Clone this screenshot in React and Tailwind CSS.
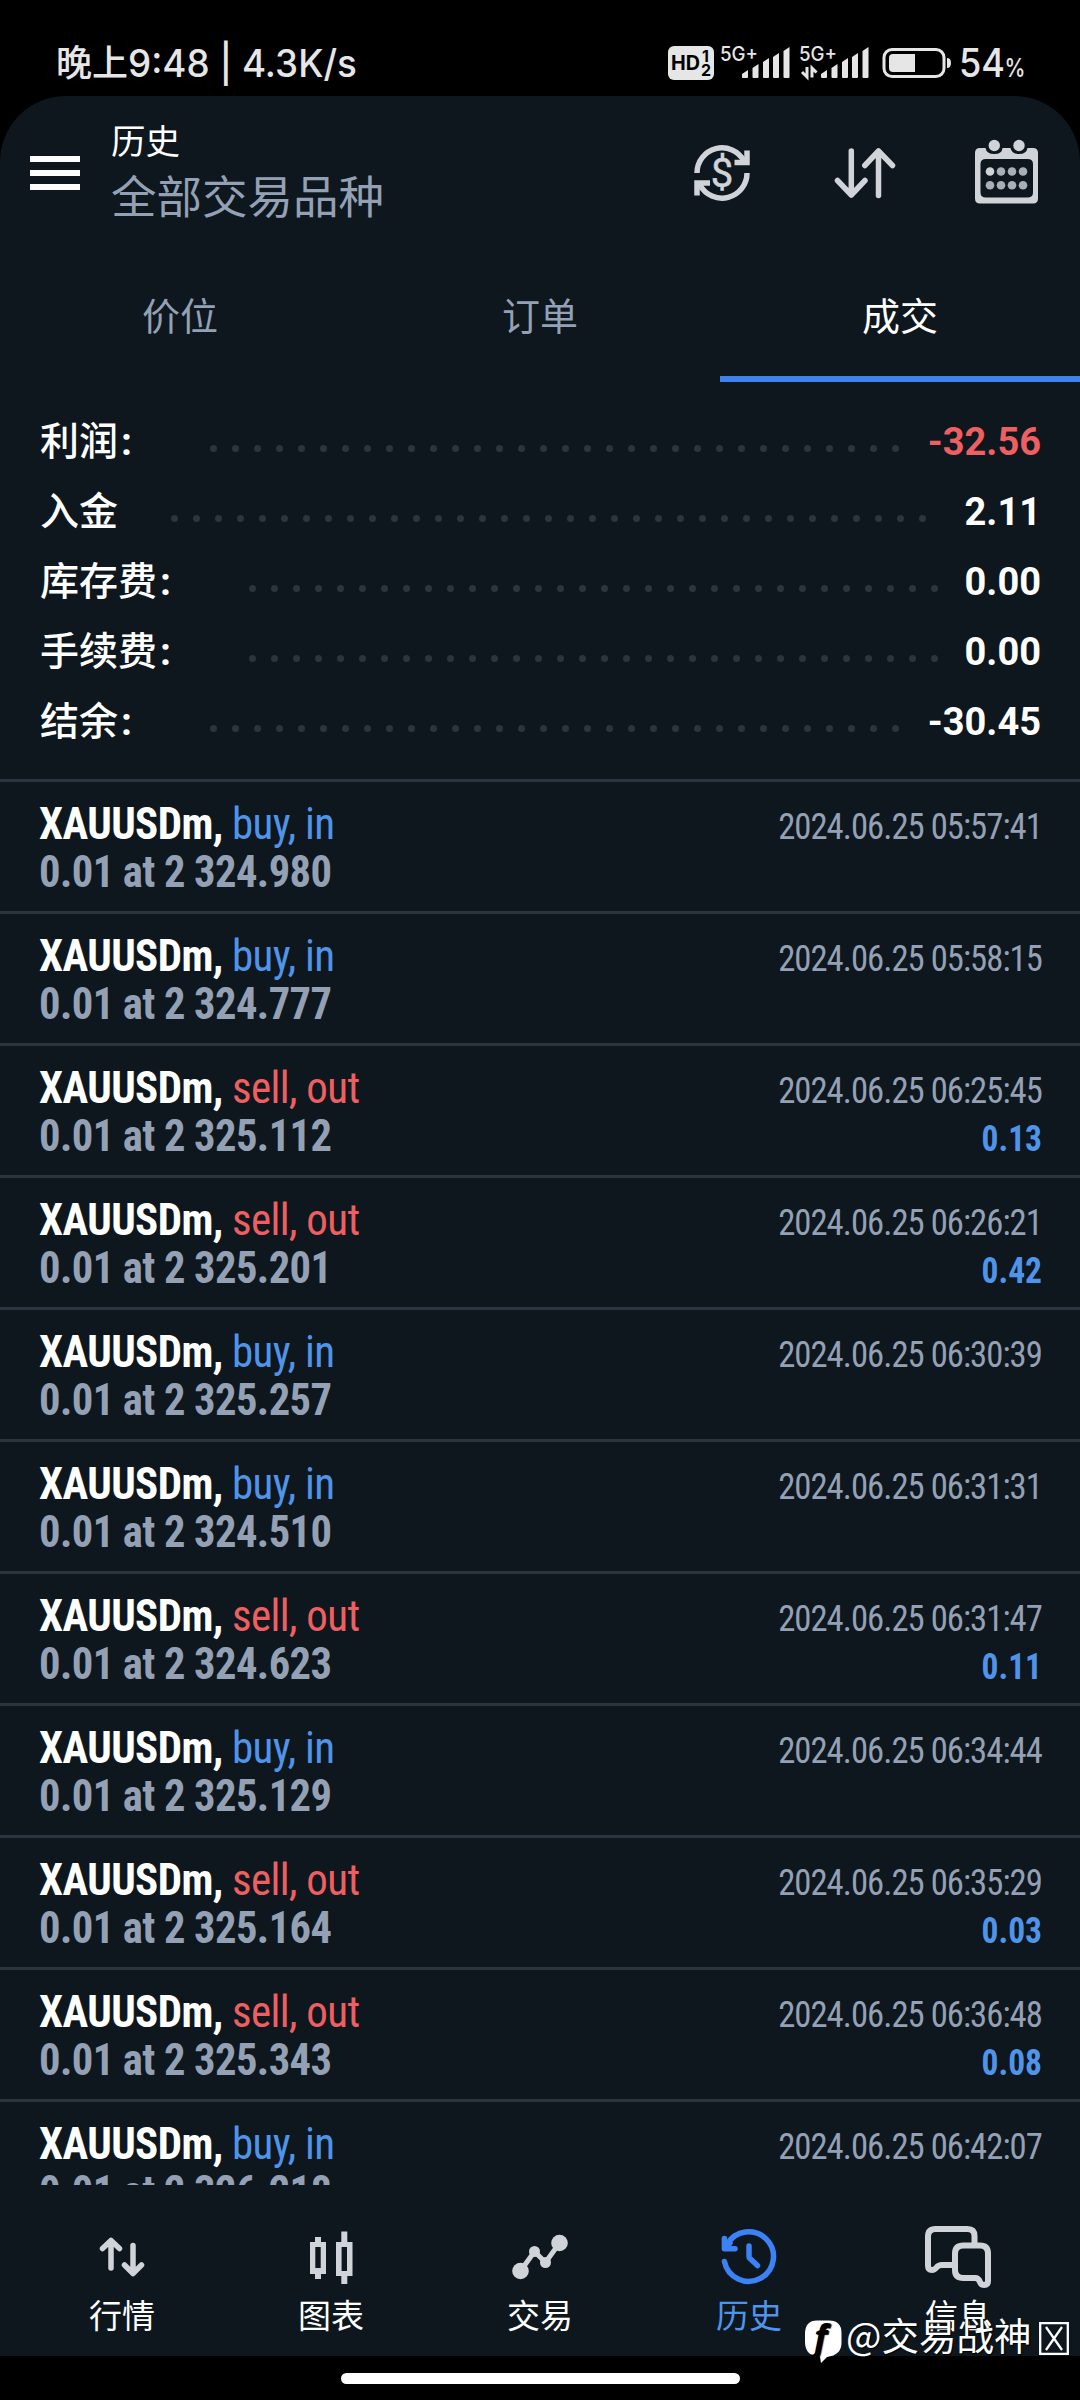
const summary = [
  { label: "利润", colon: true, value: "-32.56", start: "w-[170px]", dots: 32, color: "text-[#ee5f62]" },
  { label: "入金", value: "2.11", start: "w-[131px]", dots: 35, color: "text-white" },
  { label: "库存费", colon: true, value: "0.00", start: "w-[209px]", dots: 32, color: "text-white" },
  { label: "手续费", colon: true, value: "0.00", start: "w-[209px]", dots: 32, color: "text-white" },
  { label: "结余", colon: true, value: "-30.45", start: "w-[170px]", dots: 32, color: "text-white" },
];

const deals = [
  { side: "buy", price: "2 324.980", time: "05:57:41" },
  { side: "buy", price: "2 324.777", time: "05:58:15" },
  { side: "sell", price: "2 325.112", time: "06:25:45", profit: "0.13" },
  { side: "sell", price: "2 325.201", time: "06:26:21", profit: "0.42" },
  { side: "buy", price: "2 325.257", time: "06:30:39" },
  { side: "buy", price: "2 324.510", time: "06:31:31" },
  { side: "sell", price: "2 324.623", time: "06:31:47", profit: "0.11" },
  { side: "buy", price: "2 325.129", time: "06:34:44" },
  { side: "sell", price: "2 325.164", time: "06:35:29", profit: "0.03" },
  { side: "sell", price: "2 325.343", time: "06:36:48", profit: "0.08" },
  { side: "buy", price: "2 326.218", time: "06:42:07" },
];

function Signal({ data }) {
  return (
    <svg className="w-[71px] h-[36px] overflow-visible" viewBox="0 0 71 36" fill="#e6e6e6">
      <text x="0" y="17" fontSize="20" fontFamily="Inter" fontWeight="500" textLength="38" lengthAdjust="spacingAndGlyphs">
        5G+
      </text>
      <path d="M22 33v-3l6-4v7q0 1-1 1h-4q-1 0-1-1z" />
      <path d="M32.500 33v-9l6-4v13q0 1-1 1h-4q-1 0-1-1z" />
      <path d="M43 33V18l6-4v19q0 1-1 1h-4q-1 0-1-1z" />
      <path d="M53 33V13l6-4v24q0 1-1 1h-4q-1 0-1-1z" />
      <path d="M63.500 33V7l6-4v30q0 1-1 1h-4q-1 0-1-1z" />
      {data && (
        <path d="M8 23v10l-5-5M13 33.500V24l4.500 4.500" fill="none" stroke="#e6e6e6" strokeWidth="3" />
      )}
    </svg>
  );
}

function StatusBar() {
  return (
    <div className="h-24 pl-[56px] pr-[54px] pt-[44px] flex items-start justify-between text-[#e6e6e6] font-['Inter','Noto_Sans_CJK_SC',sans-serif]">
      <div className="h-[38px] flex items-center font-medium text-[38px] leading-[38px] whitespace-pre">
        <span className="text-[36px]">晚上</span>
        <span className="inline-block origin-left scale-x-[0.968]">9:48 | 4.3K/s</span>
      </div>
      <div className="flex items-start">
        <svg className="w-[46px] h-[36px] mr-[6px]" viewBox="0 0 46 36">
          <rect x="0" y="2" width="46" height="34" rx="6" fill="#e6e6e6" />
          <g fontFamily="Inter" fontWeight="700" fill="#000">
            <text x="3" y="26" fontSize="20" textLength="29" lengthAdjust="spacingAndGlyphs">HD</text>
            <text x="34" y="18" fontSize="16">1</text>
            <text x="33" y="32" fontSize="16">2</text>
          </g>
        </svg>
        <Signal />
        <div className="ml-2 flex">
          <Signal data />
        </div>
        <svg className="w-[70px] h-[36px] ml-[12px]" viewBox="0 0 70 36">
          <rect x="2" y="5.500" width="60" height="27" rx="8" fill="none" stroke="#e6e6e6" strokeWidth="3" />
          <path d="M11 10H33V28H11q-4 0-4-4V14q0-4 4-4z" fill="#e6e6e6" />
          <path d="M65 14q4 0 4 5t-4 5z" fill="#e6e6e6" />
        </svg>
        <svg className="w-[66px] h-[36px] ml-2 overflow-visible" viewBox="0 0 66 36" fontFamily="Inter" fontWeight="500" fill="#e6e6e6">
          <text x="-1" y="33" fontSize="39" textLength="46" lengthAdjust="spacingAndGlyphs">54</text>
          <text x="44.500" y="32.500" fontSize="25" textLength="21" lengthAdjust="spacingAndGlyphs">%</text>
        </svg>
      </div>
    </div>
  );
}

function Header() {
  return (
    <header className="h-[156px] pl-[30px] pr-[42px] pt-[24px] flex items-start">
      <div className="w-[50px] mt-[36px] flex flex-col gap-2">
        <div className="h-[6px] bg-white" />
        <div className="h-[6px] bg-white" />
        <div className="h-[6px] bg-white" />
      </div>
      <div className="ml-[31px] flex-1">
        <h1 className="text-[34.500px] leading-[38px] text-white">历史</h1>
        <p className="mt-[12px] text-[45.500px] leading-[48px] text-[#94a0b4]">全部交易品种</p>
      </div>
      <div className="mt-[18px] flex items-center">
        <svg className="w-[60px] h-[66px]" viewBox="692 138 60 66" fill="none" stroke="#d0d3d8" strokeWidth="5.500">
          <path d="M697 173a25 25 0 0 1 47-12M747 173a25 25 0 0 1-47 12" />
          <path d="M747 150.500V162.500H734.500M697 195.500V183H710" />
          <text x="722" y="187" fontSize="40" fontFamily="Roboto" textAnchor="middle" fill="#d0d3d8" stroke="#d0d3d8" strokeWidth=".5">
            $
          </text>
        </svg>
        <svg className="w-[66px] h-[66px] ml-[80px]" viewBox="832 138 66 66" fill="none" stroke="#d0d3d8" strokeWidth="5.500" strokeLinecap="round" strokeLinejoin="round">
          <path d="M851.300 151V195M837.500 180.500l13.800 14.500l13.700-14.500" />
          <path d="M878.500 195.500V151M864.800 165.500L878.500 151l14 14.500" />
        </svg>
        <svg className="w-[64px] h-[66px] ml-[76px]" viewBox="974 138 64 66" fill="#d0d3d8">
          <path fillRule="evenodd" d="M980 148H985.500Q986.500 154 994.300 154T1002.500 148H1010.500Q1011.500 154 1019 154T1027.500 148H1033Q1038 148 1038 153V198.500Q1038 203.500 1033 203.500H980Q975 203.500 975 198.500V153Q975 148 980 148ZM986 159Q980.500 159 980.500 164V192.500Q980.500 197.500 986 197.500H1027.500Q1033 197.500 1033 192.500V164Q1033 159 1027.500 159Z" />
          <circle cx="994.300" cy="145.500" r="5.700" />
          <circle cx="1019" cy="145.500" r="5.700" />
          <circle cx="990" cy="171.500" r="4.300" />
          <g fill="#a9afb7">
            <circle cx="1001" cy="171.500" r="4.300" />
            <circle cx="1012" cy="171.500" r="4.300" />
            <circle cx="1023" cy="171.500" r="4.300" />
            <circle cx="990" cy="185.300" r="4.300" />
            <circle cx="1001" cy="185.300" r="4.300" />
            <circle cx="1012" cy="185.300" r="4.300" />
            <circle cx="1023" cy="185.300" r="4.300" />
          </g>
        </svg>
      </div>
    </header>
  );
}

function Tabs() {
  return (
    <div className="h-[130px] grid grid-cols-3 text-center text-[38px] leading-[124px] text-[#94a0b4]">
      <div>价位</div>
      <div>订单</div>
      <div className="border-b-[6px] border-[#4083ef] text-white">成交</div>
    </div>
  );
}

function Summary() {
  return (
    <div className="h-[397px] pl-10 pr-[39px] pt-[25px] font-['Roboto','Noto_Sans_CJK_SC',sans-serif] text-white">
      {summary.map((row) => (
        <div key={row.label} className="h-[70px] flex items-center">
          <div className={`${row.start} shrink-0 text-[39px] leading-[70px] font-medium`}>
            {row.label}
            {row.colon && <span className="ml-[3px] font-bold">:</span>}
          </div>
          <div className="mt-[13px] flex gap-[15px]">
            {Array.from({ length: row.dots }, (_, i) => (
              <span key={i} className="size-[7px] rounded-full bg-[#2b353f]" />
            ))}
          </div>
          <div className={`ml-auto text-[38px] leading-[70px] font-bold ${row.color}`}>{row.value}</div>
        </div>
      ))}
    </div>
  );
}

function Deal({ deal }) {
  const buy = deal.side === "buy";
  return (
    <div className="h-[132px] border-t-[3px] border-[#2b353f] pl-[39px] pr-[38px] pt-[18px]">
      <div className="h-12 flex justify-between items-baseline leading-[48px]">
        <div className="text-[44px] tracking-[-0.6px] origin-left scale-x-[0.977]">
          <span className="font-bold text-white">XAUUSDm, </span>
          <span className={buy ? "text-[#5094ea]" : "text-[#ee5f62]"}>{buy ? "buy, in" : "sell, out"}</span>
        </div>
        <div className="text-[36px] text-[#94a0b4] tracking-[-1px] origin-right scale-x-[0.963]">2024.06.25 {deal.time}</div>
      </div>
      <div className="h-12 flex justify-between items-baseline leading-[48px] font-bold">
        <div className="text-[44px] text-[#94a0b4] tracking-[-0.6px] origin-left scale-x-[0.967]">0.01 at {deal.price}</div>
        {deal.profit && <div className="text-[36px] text-[#5094ea] origin-right scale-x-[0.93]">{deal.profit}</div>}
      </div>
    </div>
  );
}

const tabs = [
  {
    label: "行情",
    icon: (
      <svg className="w-[70px] h-[70px]" viewBox="87 2222 70 70" fill="none" stroke="#d0d3d8" strokeWidth="5.500" strokeLinecap="round" strokeLinejoin="round">
        <path d="M111 2268V2240.500M102.500 2248.500l8.500-8l8.500 8" />
        <path d="M133 2245.500V2273M124.500 2265l8.500 8.500l8.500-8.500" />
      </svg>
    ),
  },
  {
    label: "图表",
    icon: (
      <svg className="w-[70px] h-[70px]" viewBox="296 2222 70 70" fill="#d0d3d8">
        <path fillRule="evenodd" d="M315 2237h6v5h5v32h-5v5h-6v-5h-5v-32h5zM315.300 2247v21h5.400v-21z" />
        <path fillRule="evenodd" d="M341.300 2231.500h6v10.500h5.200v34h-5.200v8h-6v-8H336v-34h5.300zM341.600 2247v24h5.400v-24z" />
      </svg>
    ),
  },
  {
    label: "交易",
    icon: (
      <svg className="w-[70px] h-[70px]" viewBox="505 2222 70 70" fill="#d0d3d8">
        <path d="M520.500 2271L534.500 2251.500L545.500 2262.500L559.500 2243" fill="none" stroke="#d0d3d8" strokeWidth="5" />
        <circle cx="520.500" cy="2271" r="8.300" />
        <circle cx="534.500" cy="2251.500" r="5.500" />
        <circle cx="545.500" cy="2262.500" r="5.500" />
        <circle cx="559.500" cy="2243" r="8.300" />
      </svg>
    ),
  },
  {
    label: "历史",
    active: true,
    icon: (
      <svg className="w-[70px] h-[70px]" viewBox="714 2222 70 70" fill="none" stroke="#3b82f6" strokeWidth="5.500" strokeLinecap="round" strokeLinejoin="round">
        <path d="M724.400 2261.500A24.800 24.800 0 1 0 727 2244.500" />
        <path d="M724.400 2238.500V2248.800H735M726 2247l4-4" />
        <path d="M749 2246v10.500q0 1 1 2l7.500 7" />
      </svg>
    ),
  },
  {
    label: "信息",
    icon: (
      <svg className="w-[70px] h-[70px]" viewBox="923 2222 70 70" fill="none" stroke="#d0d3d8" strokeWidth="6" strokeLinecap="round" strokeLinejoin="round">
        <path d="M974.500 2243V2236Q974.500 2229 967.500 2229H935.500Q928 2229 928 2236.500V2265.500Q928 2270 932 2270Q934.500 2270 936.500 2267.500Q938.500 2265 942 2265H953" />
        <path d="M963.500 2245.500H980Q988 2245.500 988 2253.500V2281Q988 2285 984 2285Q981 2285 980 2282Q978.500 2278 975 2278H963.500Q955 2278 955 2270V2253.500Q955 2245.500 963.500 2245.500Z" />
      </svg>
    ),
  },
];

function BottomNav() {
  return (
    <nav className="h-[171px] px-[17.500px] pt-[37px] grid grid-cols-5 bg-[#0e171e]">
      {tabs.map((tab) => (
        <div key={tab.label} className="flex flex-col items-center">
          {tab.icon}
          <span className={`text-[33px] leading-[44px] ${tab.active ? "text-[#5094ea]" : "text-white"}`}>{tab.label}</span>
        </div>
      ))}
    </nav>
  );
}

function Watermark() {
  return (
    <div className="absolute left-[803px] top-[2313px] flex items-start text-white text-[37.500px] leading-[46px] [text-shadow:1px_1px_1px_#000]">
      <svg className="w-[40px] h-[50px] mr-[3px]" viewBox="0 0 40 50">
        <path d="M17 44q-15-1-15-15V21Q2 7.500 14 7.500h12q12.500 0 12.500 12.500v10q0 12-14.500 14l-6 6z" fill="#fff" />
        <text x="11" y="37" fontSize="35" fontFamily="Open Sans" fontWeight="700" fontStyle="italic" fill="#000">f</text>
      </svg>
      <span className="-mt-[2px]">@交易战神</span>
      <svg className="w-[30px] h-[33px] mt-[9px] ml-[8px]" viewBox="0 0 30 33" fill="none" stroke="#fff" strokeWidth="2.300">
        <path d="M1.200 1.200H28.800V31.800H1.200zM7 5L23 28M23 5L7 28" />
      </svg>
    </div>
  );
}

export default function App() {
  return (
    <div className="relative w-[1080px] h-[2400px] overflow-hidden bg-black font-['Noto_Sans_CJK_SC',sans-serif]">
      <StatusBar />
      <main className="h-[2260px] rounded-t-[66px] overflow-hidden bg-[#0e171e]">
        <Header />
        <Tabs />
        <Summary />
        <div className="h-[1406px] overflow-hidden font-['Roboto_Condensed','Roboto',sans-serif] [font-stretch:75%] whitespace-nowrap">
          {deals.map((deal) => (
            <Deal key={deal.time} deal={deal} />
          ))}
        </div>
        <BottomNav />
      </main>
      <div className="mx-auto mt-[17px] w-[399px] h-[11px] rounded-full bg-white" />
      <Watermark />
    </div>
  );
}
